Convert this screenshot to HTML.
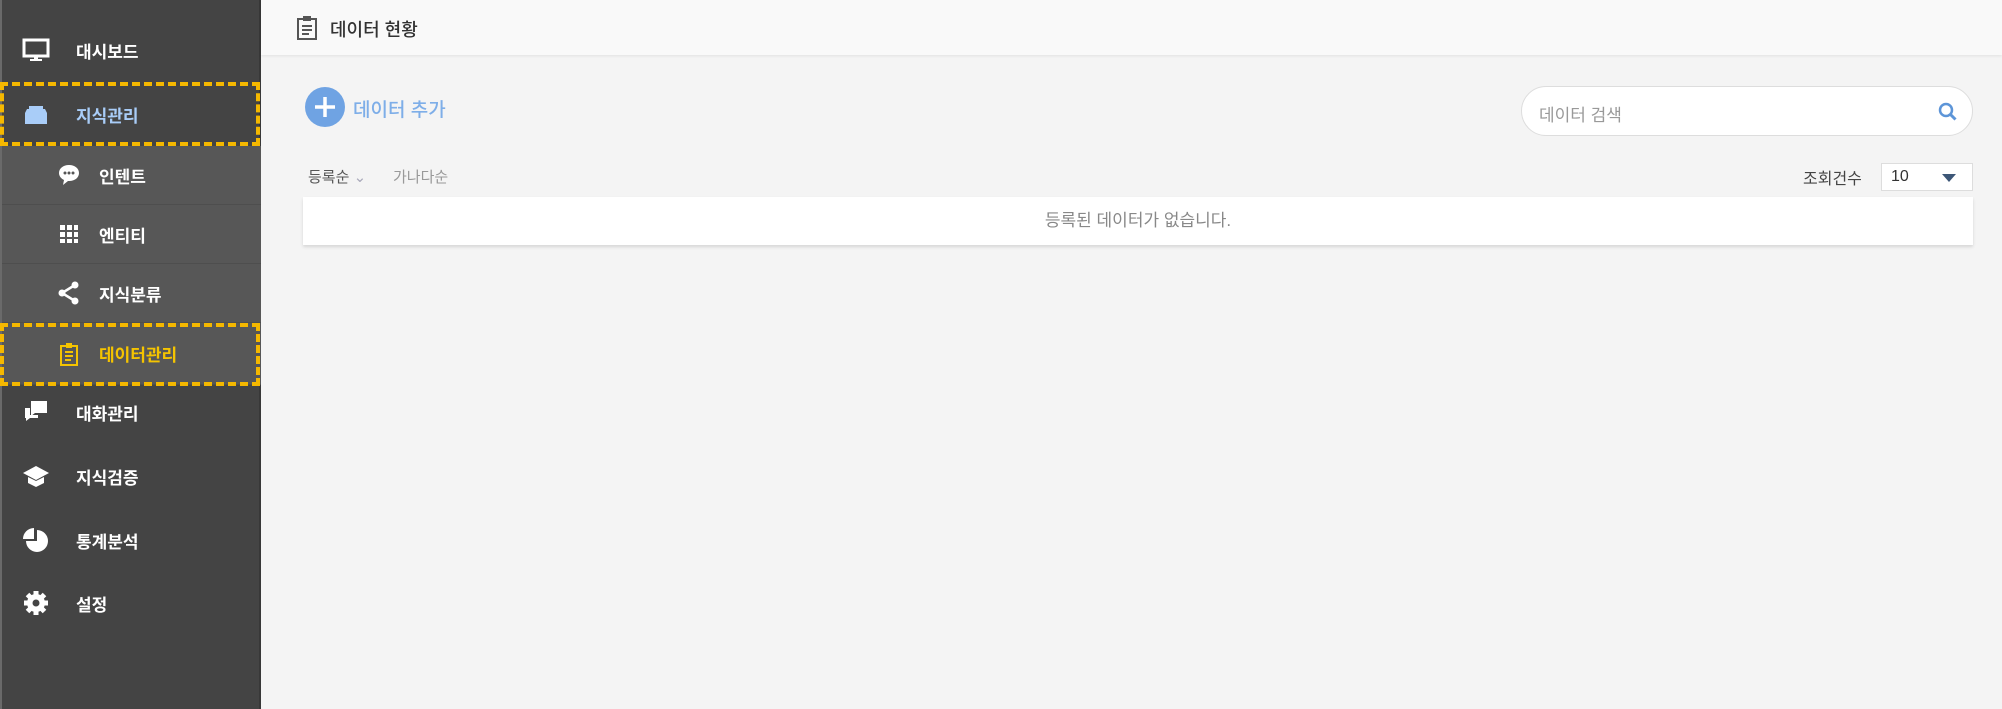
<!DOCTYPE html>
<html><head><meta charset="utf-8"><style>
*{margin:0;padding:0;box-sizing:border-box}
body{width:2002px;height:709px;overflow:hidden;background:#f4f4f4;font-family:"Liberation Sans","Noto Sans CJK KR",sans-serif;position:relative}
.sb{position:absolute;left:0;top:0;width:261px;height:709px;background:#444;border-left:2px solid #6a6a6a;border-right:2px solid #383838}
.it{position:absolute;left:0;width:259px;height:60px;color:#fff;font-size:17px;font-weight:bold;display:flex;align-items:center}
.it .ic{position:absolute;left:20px;top:50%;transform:translateY(-50%);width:28px;height:28px}
.it .tx{position:absolute;left:74px}
.sub{background:#575757;border-bottom:1px solid #4e4e4e}
.sub .ic{left:55px;width:24px;height:24px}
.sub .tx{left:97px}
.dash{position:absolute;left:0;width:260px;border:4px dashed #f5b800}
.hd{position:absolute;left:261px;top:0;right:0;height:55px;background:#f9f9f9;box-shadow:0 1px 3px rgba(0,0,0,.08)}
</style></head><body>
<div class="sb">
 <div class="it" style="top:20px"><svg class="ic" viewBox="0 0 28 28"><rect x="2" y="4" width="24" height="16" fill="none" stroke="#fff" stroke-width="3"/><rect x="12" y="20" width="4" height="4" fill="#fff"/><rect x="8" y="23" width="12" height="2" fill="#fff"/></svg><span class="tx">대시보드</span></div>
 <div class="it" style="top:84px"><svg class="ic" viewBox="0 0 28 28"><path d="M5 9h18l2 4v11H3V13z" fill="#a9cdf8"/><rect x="7" y="6" width="14" height="3" fill="#a9cdf8"/></svg><span class="tx" style="color:#a9cdf8">지식관리</span></div>
 <div class="it sub" style="top:146px;height:59px"><svg class="ic" viewBox="0 0 24 24"><path d="M12 2C6 2 2 5.5 2 10c0 3 2 5.5 5 7l-1 5 5-4h1c6 0 10-3.5 10-8S18 2 12 2z" fill="#fff"/><circle cx="8" cy="10" r="1.5" fill="#555"/><circle cx="12" cy="10" r="1.5" fill="#555"/><circle cx="16" cy="10" r="1.5" fill="#555"/></svg><span class="tx">인텐트</span></div>
 <div class="it sub" style="top:205px;height:59px"><svg class="ic" viewBox="0 0 24 24" fill="#fff"><rect x="3" y="3" width="5" height="5"/><rect x="10" y="3" width="5" height="5"/><rect x="17" y="3" width="4" height="5"/><rect x="3" y="10" width="5" height="5"/><rect x="10" y="10" width="5" height="5"/><rect x="17" y="10" width="4" height="5"/><rect x="3" y="17" width="5" height="4"/><rect x="10" y="17" width="5" height="4"/><rect x="17" y="17" width="4" height="4"/></svg><span class="tx">엔티티</span></div>
 <div class="it sub" style="top:264px;height:59px"><svg class="ic" viewBox="0 0 24 24"><path d="M18 4L5 12l13 8" stroke="#fff" stroke-width="2.5" fill="none"/><circle cx="18" cy="4" r="3.5" fill="#fff"/><circle cx="5" cy="12" r="3.5" fill="#fff"/><circle cx="18" cy="20" r="3.5" fill="#fff"/></svg><span class="tx">지식분류</span></div>
 <div class="it sub" style="top:323px;height:62px"><svg class="ic" viewBox="0 0 24 24"><rect x="4" y="4" width="16" height="19" fill="none" stroke="#f5c400" stroke-width="2"/><rect x="9" y="1" width="6" height="5" fill="#f5c400"/><path d="M8 10h8M8 14h8M8 18h6" stroke="#f5c400" stroke-width="2"/></svg><span class="tx" style="color:#f5c400">데이터관리</span></div>
 <div class="it" style="top:382px"><svg class="ic" viewBox="0 0 28 28"><path d="M9 3h16v12H13l-4 3z" fill="#fff"/><path d="M3 10h5v7h8v3H8l-4 3v-3H3z" fill="#fff"/></svg><span class="tx">대화관리</span></div>
 <div class="it" style="top:446px"><svg class="ic" viewBox="0 0 28 28"><path d="M14 4L1 11l13 7 13-7z" fill="#fff"/><path d="M6 15v6l8 4 8-4v-6l-8 4z" fill="#fff"/></svg><span class="tx">지식검증</span></div>
 <div class="it" style="top:510px"><svg class="ic" viewBox="0 0 28 28"><path d="M15 4a11 11 0 1 1-11 11h11z" fill="#fff"/><path d="M12 2v11H1A11 11 0 0 1 12 2z" fill="#fff"/></svg><span class="tx">통계분석</span></div>
 <div class="it" style="top:573px"><svg class="ic" viewBox="0 0 28 28"><circle cx="14" cy="14" r="9" fill="#fff"/><g stroke="#fff" stroke-width="5"><path d="M14 2v24M2 14h24M5.5 5.5l17 17M22.5 5.5l-17 17"/></g><circle cx="14" cy="14" r="3.5" fill="#444"/></svg><span class="tx">설정</span></div>
</div>
<div class="dash" style="top:82px;height:64px"></div>
<div class="dash" style="top:323px;height:63px"></div>
<div class="hd">
 <svg style="position:absolute;left:35px;top:15px" width="22" height="26" viewBox="0 0 22 26"><rect x="2" y="4" width="18" height="20" fill="none" stroke="#555" stroke-width="2"/><rect x="7" y="1" width="8" height="5" fill="#555"/><path d="M6 11h10M6 15h10M6 19h7" stroke="#555" stroke-width="2"/></svg>
 <div style="position:absolute;left:69px;top:16px;font-size:18px;color:#333;font-weight:500">데이터 현황</div>
</div>
<svg style="position:absolute;left:305px;top:87px" width="40" height="40"><circle cx="20" cy="20" r="20" fill="#6fa3e3"/><path d="M20 10v20M10 20h20" stroke="#fff" stroke-width="3.5"/></svg>
<div style="position:absolute;left:353px;top:95px;font-size:19px;color:#7eaee8;font-weight:500">데이터 추가</div>
<div style="position:absolute;left:1521px;top:86px;width:452px;height:50px;background:#fff;border:1px solid #ddd;border-radius:25px"><span style="position:absolute;left:17px;top:14px;font-size:17px;color:#999">데이터 검색</span><svg style="position:absolute;right:14px;top:15px" width="20" height="20"><circle cx="8" cy="8" r="6" fill="none" stroke="#5d95d8" stroke-width="2.5"/><path d="M12.5 12.5l5 5" stroke="#5d95d8" stroke-width="3"/></svg></div>
<div style="position:absolute;left:308px;top:166px;font-size:15px;color:#555">등록순 <span style="color:#aab">&#8964;</span></div>
<div style="position:absolute;left:393px;top:166px;font-size:15px;color:#999">가나다순</div>
<div style="position:absolute;left:1803px;top:165px;font-size:16px;color:#444">조회건수</div>
<div style="position:absolute;left:1881px;top:163px;width:92px;height:28px;background:#fff;border:1px solid #ddd"><span style="position:absolute;left:9px;top:4px;font-size:16px;color:#333">10</span><svg style="position:absolute;right:16px;top:10px" width="14" height="8"><path d="M0 0h14L7 8z" fill="#3d5777"/></svg></div>
<div style="position:absolute;left:303px;top:197px;width:1670px;height:48px;background:#fff;box-shadow:0 2px 3px rgba(0,0,0,.12);text-align:center;line-height:48px;font-size:17px;color:#888">등록된 데이터가 없습니다.</div>
</body></html>
